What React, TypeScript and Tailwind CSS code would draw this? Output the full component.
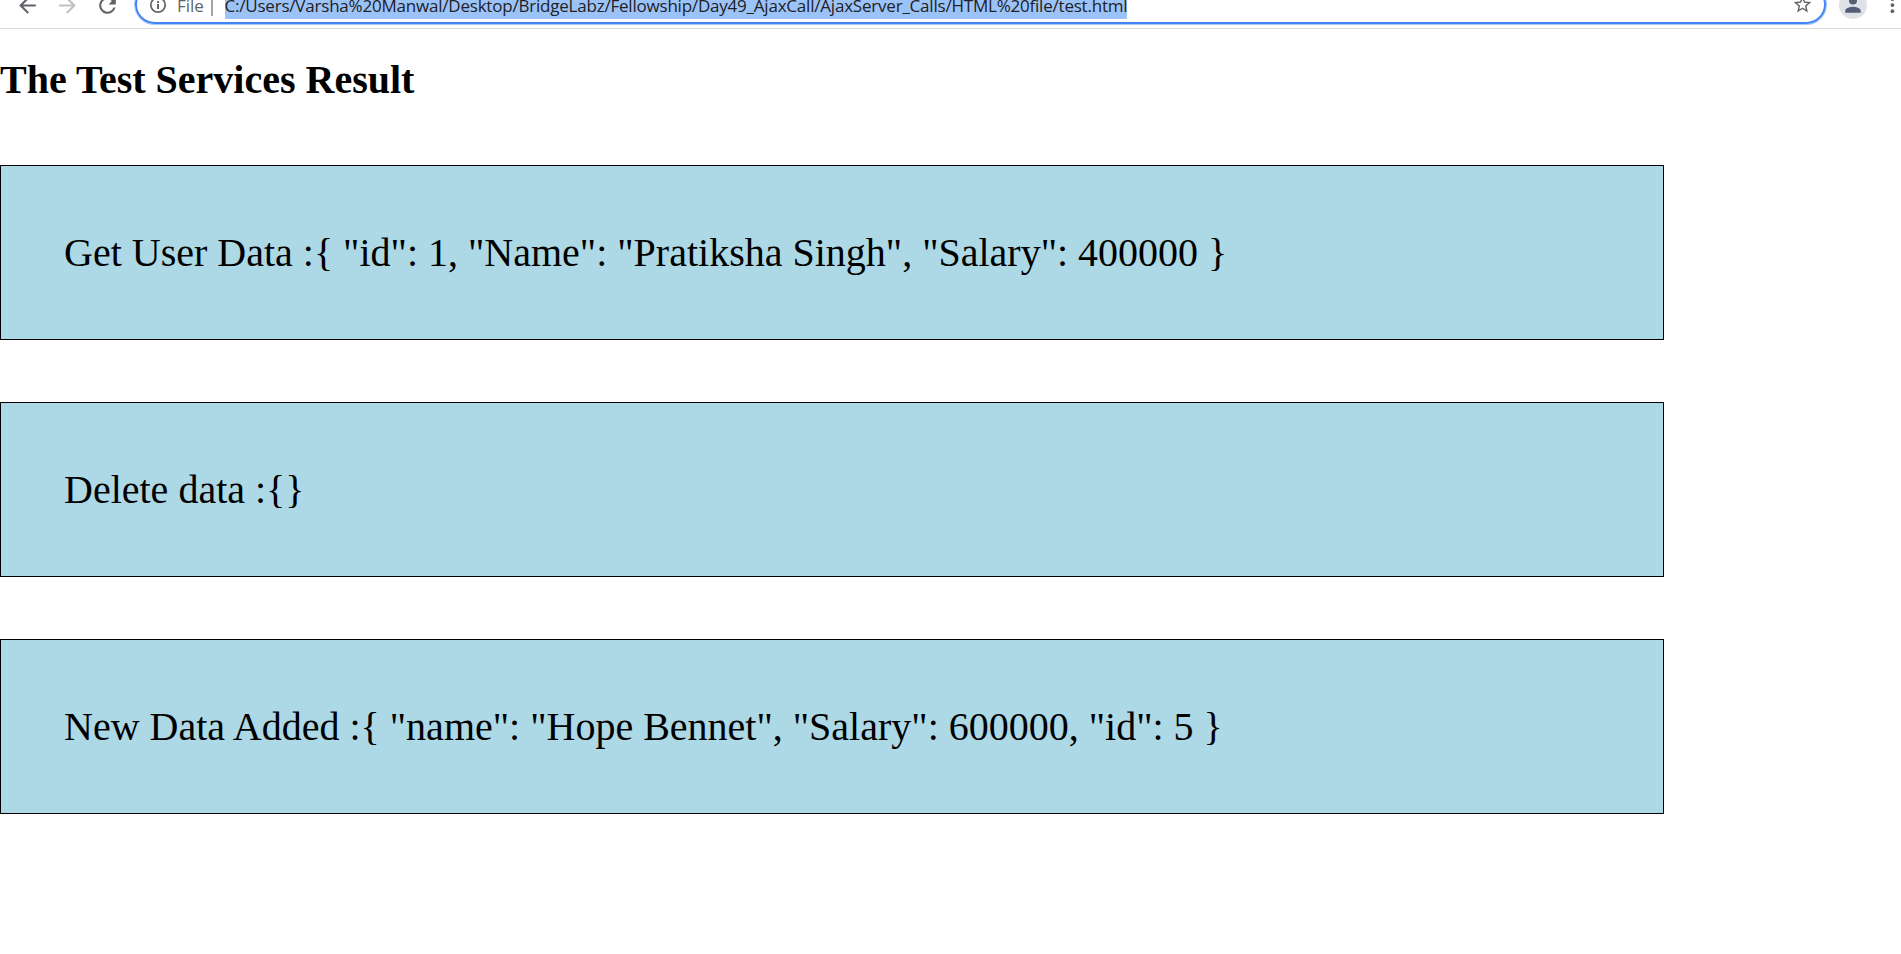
const results = [
  { label: 'Get User Data :', body: '{ "id": 1, "Name": "Pratiksha Singh", "Salary": 400000 }' },
  { label: 'Delete data :', body: '{}' },
  { label: 'New Data Added :', body: '{ "name": "Hope Bennet", "Salary": 600000, "id": 5 }' },
];

function Toolbar() {
  return (
    <header className="h-[29px] overflow-hidden border-b border-[#dadada] bg-white">
      <div className="-mt-[15px] flex h-10 items-center pl-[15px]">
        <div className="flex shrink-0 gap-[15px]">
          <svg className="size-[25px]" viewBox="0 0 24 24" fill="#5f6368">
            <path d="M20 11H7.83l5.59-5.59L12 4l-8 8 8 8 1.41-1.41L7.83 13H20v-2z" />
          </svg>
          <svg className="size-[25px]" viewBox="0 0 24 24" fill="#bfc1c3">
            <path d="M12 4l-1.41 1.41L16.17 11H4v2h12.17l-5.58 5.59L12 20l8-8z" />
          </svg>
          <svg className="size-[25px]" viewBox="0 0 24 24" fill="#5f6368">
            <path d="M17.65 6.35A7.96 7.96 0 0 0 12 4a8 8 0 1 0 7.73 10h-2.08A6 6 0 1 1 12 6c1.66 0 3.14.69 4.22 1.78L13 11h7V4l-2.35 2.35z" />
          </svg>
        </div>
        <div className="mb-px ml-[15px] flex h-[39px] w-[1691px] shrink-0 items-center rounded-full border-2 border-[#4285f4] font-['Open_Sans',sans-serif] text-[17px] shadow-[0_0_0_1px_#a9c8fa]">
          <svg className="ml-[11px] size-5 shrink-0" viewBox="0 0 20 20" fill="none" stroke="#5f6368">
            <circle cx="10" cy="10" r="7.2" strokeWidth="1.7" />
            <path d="M10 9v5M10 6v1.9" strokeWidth="1.9" />
          </svg>
          <span className="ml-[9px] w-[28px] whitespace-nowrap pt-[3px] text-[#5f6368]">File</span>
          <span className="ml-[6px] h-[22px] w-[1.5px] bg-[#a0a2a5]" />
          <span className="ml-[12px] flex h-[28px] w-[902.5px] shrink-0 items-center whitespace-nowrap bg-[#9cc3f8] pt-[2px] tracking-[-0.21px] text-[#202124]">
            C:/Users/Varsha%20Manwal/Desktop/BridgeLabz/Fellowship/Day49_AjaxCall/AjaxServer_Calls/HTML%20file/test.html
          </span>
          <svg className="ml-auto mr-[11px] size-[21px] shrink-0" viewBox="0 0 24 24" fill="#5f6368">
            <path d="M22 9.24l-7.19-.62L12 2 9.19 8.63 2 9.24l5.46 4.73L5.82 21 12 17.27 18.18 21l-1.63-7.03L22 9.24zM12 15.4l-3.76 2.27 1-4.28-3.32-2.88 4.38-.38L12 6.1l1.71 4.04 4.38.38-3.32 2.88 1 4.28L12 15.4z" />
          </svg>
        </div>
        <svg className="ml-[13px] size-7 shrink-0" viewBox="0 0 28 28">
          <circle cx="14" cy="14" r="14" fill="#dee1e6" />
          <circle cx="14" cy="9.5" r="4" fill="#535e75" />
          <path d="M6.3 21.8v-2c0-2.7 5.1-4 7.7-4s7.7 1.3 7.7 4v2z" fill="#535e75" />
        </svg>
        <svg className="ml-[16px] size-5 shrink-0" viewBox="0 0 20 20" fill="#5f6368">
          <circle cx="9.4" cy="4" r="1.9" />
          <circle cx="9.4" cy="10.1" r="1.9" />
          <circle cx="9.4" cy="16.2" r="1.9" />
        </svg>
      </div>
    </header>
  );
}

export default function App() {
  return (
    <div className="h-[954px] overflow-hidden bg-white text-black">
      <Toolbar />
      <main className="font-['Liberation_Serif',serif] text-[40px] leading-[46px]">
        <h1 className="pt-[28px] font-bold">The Test Services Result</h1>
        <div className="mt-[62px] flex flex-col gap-[62px]">
          {results.map((r) => (
            <section key={r.label} className="h-[175px] w-[1664px] whitespace-nowrap border border-black bg-[#add8e6] px-[63px] pt-[64px]">
              {r.label}{r.body}
            </section>
          ))}
        </div>
      </main>
    </div>
  );
}
